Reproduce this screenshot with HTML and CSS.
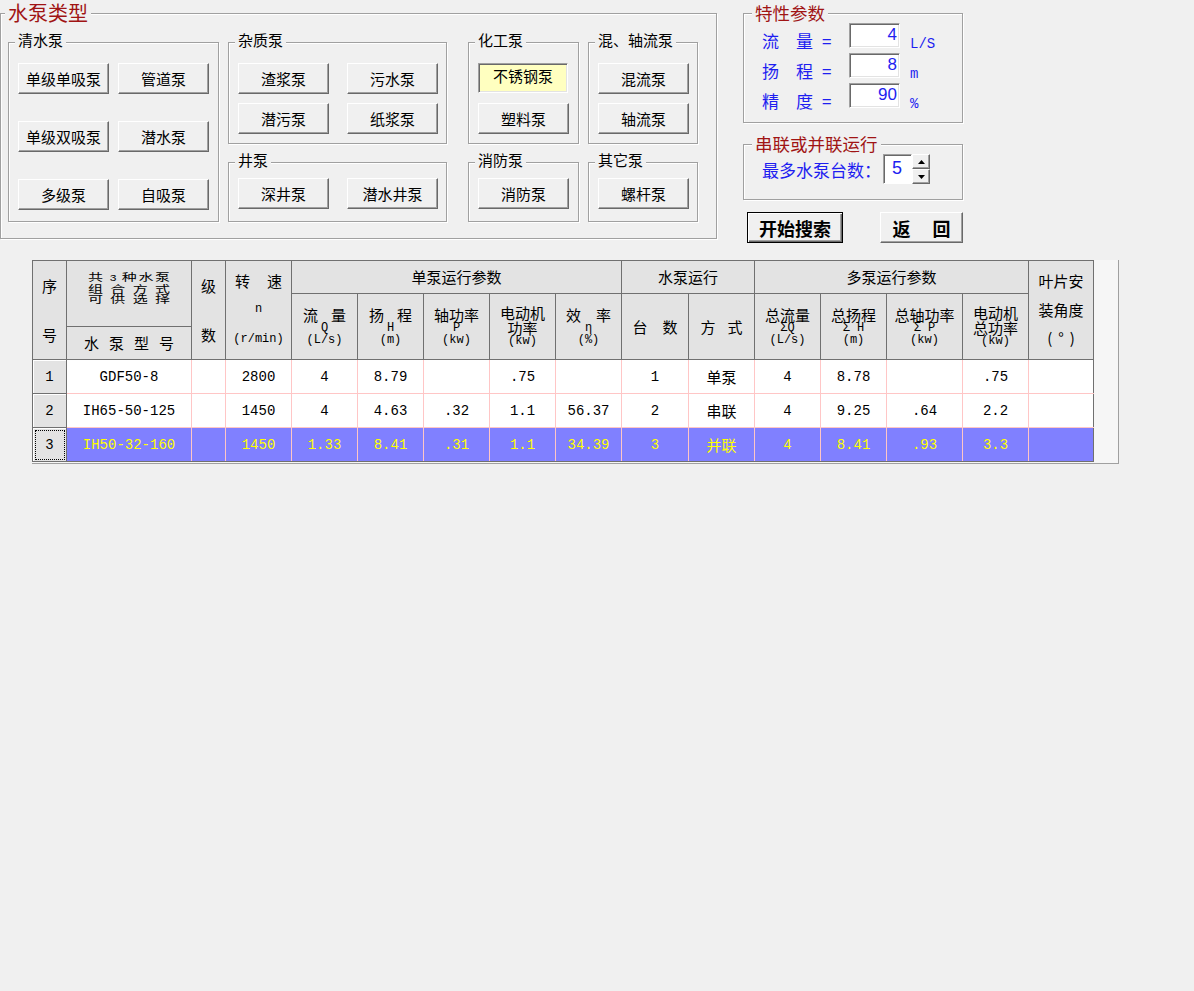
FILE: index.html
```html
<!DOCTYPE html>
<html lang="zh-CN">
<head>
<meta charset="utf-8">
<title>水泵选型</title>
<link rel="stylesheet" href="styles.css">
</head>
<body>
<div class="top">
  <div class="group g-main">
    <span class="gt gt-main">水泵类型</span>

    <div class="group g-clear">
      <span class="gt">清水泵</span>
      <button class="btn">单级单吸泵</button>
      <button class="btn">管道泵</button>
      <button class="btn">单级双吸泵</button>
      <button class="btn">潜水泵</button>
      <button class="btn">多级泵</button>
      <button class="btn">自吸泵</button>
    </div>

    <div class="col col-2">
      <div class="group g-tall">
        <span class="gt">杂质泵</span>
        <button class="btn">渣浆泵</button>
        <button class="btn">污水泵</button>
        <button class="btn">潜污泵</button>
        <button class="btn">纸浆泵</button>
      </div>
      <div class="group g-short">
        <span class="gt">井泵</span>
        <button class="btn">深井泵</button>
        <button class="btn">潜水井泵</button>
      </div>
    </div>

    <div class="col col-3">
      <div class="group g-tall">
        <span class="gt">化工泵</span>
        <button class="btn btn-on">不锈钢泵</button>
        <button class="btn">塑料泵</button>
      </div>
      <div class="group g-short">
        <span class="gt">消防泵</span>
        <button class="btn">消防泵</button>
      </div>
    </div>

    <div class="col col-4">
      <div class="group g-tall">
        <span class="gt">混、轴流泵</span>
        <button class="btn">混流泵</button>
        <button class="btn">轴流泵</button>
      </div>
      <div class="group g-short">
        <span class="gt">其它泵</span>
        <button class="btn">螺杆泵</button>
      </div>
    </div>
  </div>

  <div class="side">
    <div class="group g-char">
      <span class="gt gt-side">特性参数</span>
      <div class="prow">
        <span class="plabel"><span class="c1">流</span><span class="c2">量</span><span>=</span></span>
        <input class="pin" type="text" value="4" readonly>
        <span class="unit">L/S</span>
      </div>
      <div class="prow">
        <span class="plabel"><span class="c1">扬</span><span class="c2">程</span><span>=</span></span>
        <input class="pin" type="text" value="8" readonly>
        <span class="unit">m</span>
      </div>
      <div class="prow">
        <span class="plabel"><span class="c1">精</span><span class="c2">度</span><span>=</span></span>
        <input class="pin" type="text" value="90" readonly>
        <span class="unit">%</span>
      </div>
    </div>

    <div class="group g-series">
      <span class="gt gt-side">串联或并联运行</span>
      <span class="slabel">最多水泵台数：</span>
      <div class="spin">
        <input class="spin-val" type="text" value="5" readonly>
        <div class="spin-btns">
          <button class="spin-btn" aria-label="增加"><svg width="7" height="4" viewBox="0 0 7 4"><path d="M3.5 0 L7 4 L0 4 Z" fill="#000"/></svg></button>
          <button class="spin-btn" aria-label="减少"><svg width="7" height="4" viewBox="0 0 7 4"><path d="M0 0 L7 0 L3.5 4 Z" fill="#000"/></svg></button>
        </div>
      </div>
    </div>

    <div class="actions">
      <button class="btn btn-main btn-default">开始搜索</button>
      <button class="btn btn-main btn-back"><span>返</span><span>回</span></button>
    </div>
  </div>
</div>

<div class="grid-wrap">
  <table class="grid">
    <colgroup>
      <col style="width:34px"><col style="width:125px"><col style="width:34px"><col style="width:66px">
      <col style="width:66px"><col style="width:66px"><col style="width:66px"><col style="width:66px">
      <col style="width:66px"><col style="width:67px"><col style="width:66px"><col style="width:66px">
      <col style="width:66px"><col style="width:76px"><col style="width:66px"><col style="width:65px">
    </colgroup>
    <thead>
      <tr class="hd1">
        <th rowspan="2"><div class="two"><div>序</div><div>号</div></div></th>
        <th rowspan="2" class="th-model">
          <div class="model-top">
            <div class="squash">
              <div class="jl">共 <span class="m">3</span> 种水泵</div>
              <div class="jl">组 合 方 式</div>
              <div class="jl">可 供 选 择</div>
            </div>
          </div>
          <div class="model-bot"><span>水</span><span>泵</span><span>型</span><span>号</span></div>
        </th>
        <th rowspan="2"><div class="two"><div>级</div><div>数</div></div></th>
        <th rowspan="2">
          <div class="three">
            <div class="gap g17"><span>转</span><span>速</span></div>
            <div class="m">n</div>
            <div class="m">(r/min)</div>
          </div>
        </th>
        <th colspan="5">单泵运行参数</th>
        <th colspan="2">水泵运行</th>
        <th colspan="4">多泵运行参数</th>
        <th rowspan="2">
          <div class="three blade">
            <div>叶片安</div>
            <div>装角度</div>
            <div class="gap g6"><span>(</span><span>°</span><span>)</span></div>
          </div>
        </th>
      </tr>
      <tr class="hd2">
        <th><div class="stk"><div class="cl gap g13"><span>流</span><span>量</span></div><div class="m">Q</div><div class="m">(L/s)</div></div></th>
        <th><div class="stk"><div class="cl gap g13"><span>扬</span><span>程</span></div><div class="m">H</div><div class="m">(m)</div></div></th>
        <th><div class="stk"><div class="cl">轴功率</div><div class="m">P</div><div class="m">(kw)</div></div></th>
        <th><div class="stk"><div class="cl">电动机</div><div class="cl">功率</div><div class="m">(kw)</div></div></th>
        <th><div class="stk"><div class="cl gap g15"><span>效</span><span>率</span></div><div class="m">η</div><div class="m">(%)</div></div></th>
        <th><div class="gap g15"><span>台</span><span>数</span></div></th>
        <th><div class="gap g12"><span>方</span><span>式</span></div></th>
        <th><div class="stk"><div class="cl">总流量</div><div class="m">ΣQ</div><div class="m">(L/s)</div></div></th>
        <th><div class="stk"><div class="cl">总扬程</div><div class="m">Σ H</div><div class="m">(m)</div></div></th>
        <th><div class="stk"><div class="cl">总轴功率</div><div class="m">Σ P</div><div class="m">(kw)</div></div></th>
        <th><div class="stk"><div class="cl">电动机</div><div class="cl">总功率</div><div class="m">(kw)</div></div></th>
      </tr>
    </thead>
    <tbody>
      <tr>
        <td class="seq">1</td><td>GDF50-8</td><td></td><td>2800</td><td>4</td><td>8.79</td><td></td><td>.75</td><td></td>
        <td>1</td><td class="cn">单泵</td><td>4</td><td>8.78</td><td></td><td>.75</td><td class="last"></td>
      </tr>
      <tr>
        <td class="seq">2</td><td>IH65-50-125</td><td></td><td>1450</td><td>4</td><td>4.63</td><td>.32</td><td>1.1</td><td>56.37</td>
        <td>2</td><td class="cn">串联</td><td>4</td><td>9.25</td><td>.64</td><td>2.2</td><td class="last"></td>
      </tr>
      <tr class="sel">
        <td class="seq">3</td><td>IH50-32-160</td><td></td><td>1450</td><td>1.33</td><td>8.41</td><td>.31</td><td>1.1</td><td>34.39</td>
        <td>3</td><td class="cn">并联</td><td>4</td><td>8.41</td><td>.93</td><td>3.3</td><td class="last"></td>
      </tr>
    </tbody>
  </table>
</div>
</body>
</html>
```
FILE: styles.css
```css
* { box-sizing: border-box; }

body {
  margin: 0;
  width: 1194px;
  height: 991px;
  background: #f0f0f0;
  color: #000;
  font-family: "Noto Sans CJK SC", "Liberation Sans", sans-serif;
  font-size: 15px;
}

/* ---------- etched group boxes ---------- */
.group {
  position: relative;
  border: 1px solid #a0a0a0;
  box-shadow: inset 1px 1px 0 #fff, 1px 1px 0 #fff;
}

.gt {
  position: absolute;
  top: -12px;
  left: 6px;
  padding: 0 3px;
  background: #f0f0f0;
  font-size: 15px;
  line-height: 18px;
  white-space: nowrap;
}

.gt-main {
  top: -13px;
  left: 4px;
  font-size: 20px;
  line-height: 24px;
  color: #a01414;
}

.gt-side {
  top: -12px;
  left: 8px;
  font-size: 17.5px;
  line-height: 22px;
  color: #a01414;
}

/* ---------- classic 3D buttons ---------- */
.btn {
  margin: 0;
  padding: 0;
  width: 91px;
  height: 31px;
  background: #f0f0f0;
  border: 1px solid;
  border-color: #fff #696969 #696969 #fff;
  box-shadow: inset -1px -1px 0 #a0a0a0;
  font-family: "Noto Sans CJK SC", sans-serif;
  font-size: 15px;
  line-height: 18px;
  color: #000;
}

.btn-on {
  width: 90px;
  height: 30px;
  background: #ffffc0;
  border-color: #a0a0a0 #fff #fff #a0a0a0;
  box-shadow: inset 1px 1px 0 #696969, inset -1px -1px 0 #e3e3e3;
  padding-bottom: 5px;
}

/* ---------- top area ---------- */
.top {
  display: flex;
  align-items: flex-start;
  height: 260px;
  padding-top: 13px;
}

.g-main {
  display: flex;
  align-items: flex-start;
  width: 717px;
  height: 226px;
  padding: 28px 0 0 7px;
}

.g-clear {
  display: grid;
  grid-template-columns: 91px 91px;
  grid-auto-rows: 31px;
  column-gap: 9px;
  row-gap: 27px;
  align-content: start;
  width: 211px;
  height: 180px;
  padding: 20px 0 0 9px;
}

.col {
  display: flex;
  flex-direction: column;
  gap: 18px;
}

.col-2 { margin-left: 9px; width: 219px; }
.col-3 { margin-left: 21px; width: 111px; }
.col-4 { margin-left: 9px; width: 110px; }

.g-tall,
.g-short {
  display: grid;
  grid-auto-rows: 31px;
  column-gap: 18px;
  row-gap: 9px;
  align-content: start;
  padding-left: 9px;
}

.g-tall { height: 102px; padding-top: 20px; }
.g-short { height: 60px; padding-top: 15px; }

.col-2 .group { grid-template-columns: 91px 91px; }
.col-3 .group,
.col-4 .group { grid-template-columns: 91px; }

/* ---------- right side panel ---------- */
.side {
  margin-left: 26px;
  width: 220px;
}

.g-char {
  display: flex;
  flex-direction: column;
  gap: 5px;
  height: 110px;
  padding: 9px 0 0 18px;
}

.prow {
  display: flex;
  align-items: flex-start;
  height: 25px;
}

.plabel {
  display: flex;
  width: 87px;
  padding-top: 9px;
  font-size: 17px;
  line-height: 18px;
  color: #1e1ef0;
}

.plabel .c1 { width: 34px; }
.plabel .c2 { width: 26px; }

.pin {
  width: 51px;
  height: 25px;
  margin: 0;
  padding: 0 2px 2px 0;
  background: #fff;
  border: 1px solid;
  border-color: #a0a0a0 #fff #fff #a0a0a0;
  box-shadow: inset 1px 1px 0 #696969, inset -1px -1px 0 #e3e3e3;
  text-align: right;
  font-family: "Liberation Sans", sans-serif;
  font-size: 17px;
  color: #1e1ef0;
  outline: none;
}

.unit {
  margin-left: 10px;
  padding-top: 12px;
  font-family: "Liberation Mono", monospace;
  font-size: 14px;
  line-height: 18px;
  color: #1e1ef0;
}

.g-series {
  display: flex;
  align-items: flex-start;
  margin-top: 21px;
  height: 56px;
  padding: 9px 0 0 18px;
}

.slabel {
  width: 121px;
  padding-top: 7px;
  font-size: 17px;
  line-height: 18px;
  color: #1e1ef0;
  white-space: nowrap;
}

.spin {
  display: flex;
}

.spin-val {
  width: 29px;
  height: 30px;
  margin: 0;
  padding: 0 0 2px 8px;
  background: #fff;
  border: 1px solid;
  border-color: #a0a0a0 #fff #fff #a0a0a0;
  box-shadow: inset 1px 1px 0 #696969;
  font-family: "Liberation Sans", sans-serif;
  font-size: 18px;
  color: #1e1ef0;
  outline: none;
}

.spin-btns {
  display: flex;
  flex-direction: column;
}

.spin-btn {
  display: flex;
  align-items: center;
  justify-content: center;
  width: 18px;
  height: 15px;
  margin: 0;
  padding: 0;
  background: #f0f0f0;
  border: 1px solid;
  border-color: #fff #696969 #696969 #fff;
  box-shadow: inset -1px -1px 0 #a0a0a0;
}

.actions {
  display: flex;
  margin-top: 12px;
  padding-left: 4px;
}

.btn-main {
  height: 31px;
  font-size: 18px;
  font-weight: bold;
}

.btn-default {
  width: 96px;
  border: 1px solid #000;
  box-shadow: inset 1px 1px 0 #fff, inset -1px -1px 0 #696969, inset -2px -2px 0 #a0a0a0;
}

.btn-back {
  display: flex;
  align-items: center;
  justify-content: center;
  gap: 22px;
  width: 83px;
  margin-left: 37px;
  border-color: #fff #696969 #696969 #fff;
}

/* ---------- result grid ---------- */
.grid-wrap {
  width: 1087px;
  height: 204px;
  margin-left: 32px;
  border: 1px solid #a0a0a0;
  border-top: 0;
  border-left: 0;
  background: #f6f6f6;
}

.grid {
  border-collapse: collapse;
  table-layout: fixed;
  width: 1062px;
}

.grid th {
  padding: 0;
  background: #e3e3e3;
  border: 1px solid #707070;
  font-weight: normal;
  font-size: 15px;
  line-height: 18px;
  text-align: center;
  vertical-align: middle;
}

.hd1 th { height: 33px; }
.hd2 th { height: 66px; }

.m {
  font-family: "Liberation Mono", monospace;
  font-size: 12px;
}

.two > div { line-height: 49px; }

.three > div { line-height: 29.5px; }
.three.blade > div { line-height: 28.5px; }

.stk { padding-bottom: 1px; }
.stk > div { line-height: 12px; }
.stk > .cl { line-height: 15px; }

.gap {
  display: flex;
  justify-content: center;
}
.g6 { gap: 6px; }
.g12 { gap: 12px; }
.g13 { gap: 13px; }
.g15 { gap: 15px; }
.g17 { gap: 17px; }

.grid th.th-model { vertical-align: top; }

.model-top {
  height: 66px;
  padding-top: 4px;
  border-bottom: 1px solid #707070;
}

.squash {
  width: 82px;
  margin: 0 auto;
  transform: scaleY(0.7);
}

.jl {
  line-height: 14px;
  text-align: justify;
  text-align-last: justify;
}

.model-bot {
  display: flex;
  justify-content: center;
  align-items: center;
  gap: 10px;
  height: 32px;
}

.grid td {
  height: 34px;
  padding: 0;
  background: #fff;
  border: 1px solid #ffc6c6;
  text-align: center;
  font-family: "Liberation Mono", monospace;
  font-size: 14px;
}

.grid td.cn {
  font-family: "Noto Sans CJK SC", sans-serif;
  font-size: 15px;
}

.grid td.seq {
  background: #e3e3e3;
  border: 1px solid #707070;
  box-shadow: inset 1px 1px 0 #fff;
}

.grid td.last { border-right-color: #707070; }

.grid .sel td {
  background: #8080ff;
  color: #ffff00;
  border-bottom-color: #707070;
}

.grid .sel td.seq {
  background: #e3e3e3;
  color: #000;
  outline: 1px dotted #000;
  outline-offset: -3px;
}
```
